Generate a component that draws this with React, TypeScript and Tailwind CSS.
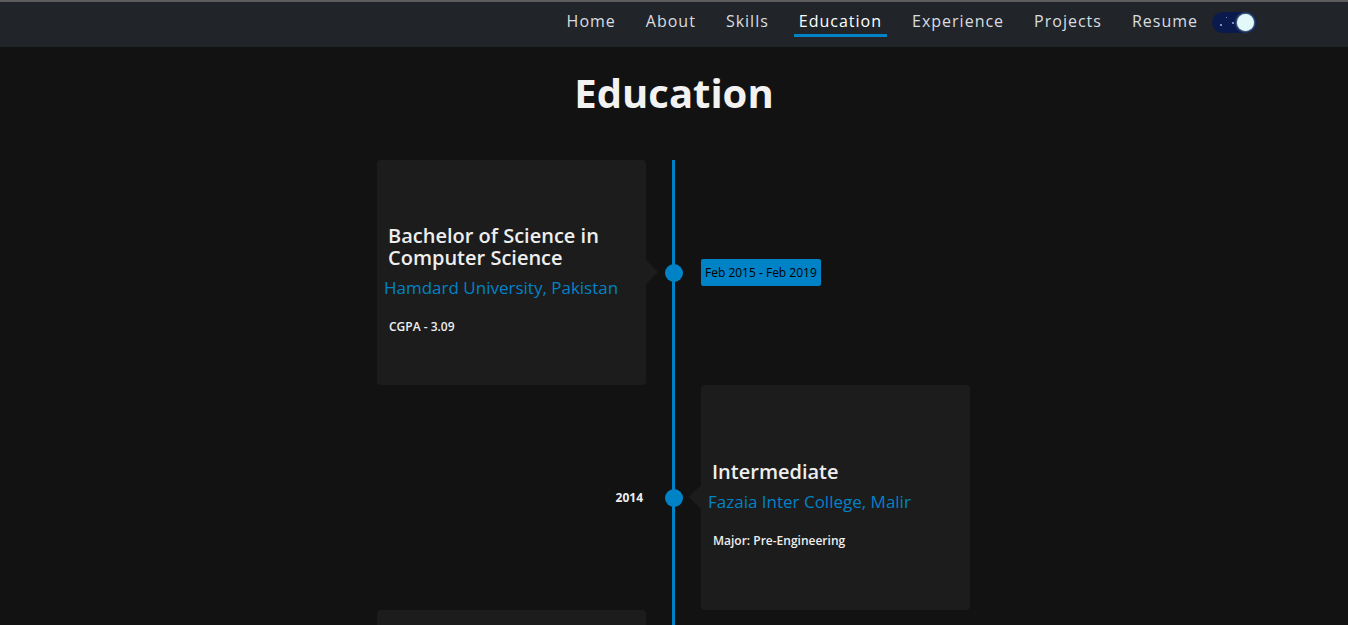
import React from "react";

const font = { fontFamily: '"Open Sans", "Noto Sans", sans-serif' };

const links = ["Home", "About", "Skills", "Education", "Experience", "Projects", "Resume"];

const Toggle = () => (
  <div className="relative ml-[9px] mt-[10px] h-[21px] w-[45px] rounded-full bg-[#0b1a4d]">
    <span className="absolute left-[8px] top-[12px] h-[2px] w-[2px] rounded-full bg-[#9fb3e6]" />
    <span className="absolute left-[14px] top-[5px] h-[1px] w-[1px] rounded-full bg-[#9fb3e6]" />
    <span className="absolute left-[20px] top-[10px] h-[2px] w-[2px] rounded-full bg-[#9fb3e6]" />
    <span className="absolute right-[3px] top-[2px] h-[17px] w-[17px] rounded-full bg-[#e3f8f8] shadow-[0_0_3px_#bfeaf0]" />
  </div>
);

const Navbar = () => (
  <div className="border-t-2 border-[#5d5d5d] bg-[#212529]">
    <div className="flex h-[45px] items-start justify-end pr-[91px]">
      <nav className="flex items-start gap-[20px] pt-[7px]">
        {links.map((l) => (
          <a
            key={l}
            className={`relative px-[5px] text-[16px] leading-[24px] tracking-[1px] ${
              l === "Education" ? "text-white" : "text-[#d9dde0]"
            }`}
          >
            {l}
            {l === "Education" && (
              <span className="absolute bottom-[-4px] left-0 h-[3px] w-full bg-[#0082c6]" />
            )}
          </a>
        ))}
      </nav>
      <Toggle />
    </div>
  </div>
);

type Item = {
  side: "left" | "right";
  title: string[];
  school: string;
  note: string;
  date: string;
  badge: boolean;
};

const items: Item[] = [
  {
    side: "left",
    title: ["Bachelor of Science in", "Computer Science"],
    school: "Hamdard University, Pakistan",
    note: "CGPA - 3.09",
    date: "Feb 2015 - Feb 2019",
    badge: true,
  },
  {
    side: "right",
    title: ["Intermediate"],
    school: "Fazaia Inter College, Malir",
    note: "Major: Pre-Engineering",
    date: "2014",
    badge: false,
  },
  {
    side: "left",
    title: ["Matriculation"],
    school: "",
    note: "",
    date: "",
    badge: false,
  },
];

const Card = ({ item }: { item: Item }) => (
  <div className="relative flex h-[225px] w-[269px] shrink-0 flex-col justify-center rounded-[4px] bg-[#1c1c1c] px-[11px] pt-[16px]">
    {item.side === "left" ? (
      <span className="absolute right-[-12px] top-[100px] h-0 w-0 border-y-[12px] border-l-[12px] border-y-transparent border-l-[#1c1c1c]" />
    ) : (
      <span className="absolute left-[-12px] top-[100px] h-0 w-0 border-y-[12px] border-r-[12px] border-y-transparent border-r-[#1c1c1c]" />
    )}
    <h3 className="text-[20px] font-semibold leading-[22px] text-[#eeeeee]">
      {item.title.map((t) => (
        <div key={t}>{t}</div>
      ))}
    </h3>
    <h4 className="ml-[-4px] mt-[7px] text-[17px] font-medium leading-[24px] text-[#0082c6]">
      {item.school}
    </h4>
    <p className="ml-[1px] mt-[18px] text-[12px] font-semibold text-[#eeeeee]">{item.note}</p>
  </div>
);

const DateLabel = ({ item }: { item: Item }) =>
  item.badge ? (
    <span className="flex h-[27px] items-center rounded-[2px] bg-[#0082c6] px-[4px] text-[12px] text-black">
      {item.date}
    </span>
  ) : (
    <span className="mr-[3px] text-[12px] font-bold text-[#eeeeee]">{item.date}</span>
  );

const Row = ({ item }: { item: Item }) => (
  <div className="grid h-[225px] grid-cols-[269px_55px_269px]">
    <div className="flex items-center justify-end">
      {item.side === "left" ? <Card item={item} /> : item.date && <DateLabel item={item} />}
    </div>
    <div className="relative flex items-center justify-center">
      <div className="absolute inset-y-0 left-[26px] w-[3px] bg-[#0082c6]" />
      <div className="relative h-[18px] w-[18px] rounded-full bg-[#0082c6]" />
    </div>
    <div className="flex items-center justify-start">
      {item.side === "right" ? <Card item={item} /> : item.date && <DateLabel item={item} />}
    </div>
  </div>
);

export default function App() {
  return (
    <div className="h-[625px] overflow-hidden bg-[#121212]" style={font}>
      <Navbar />
      <h1 className="mt-[19px] text-center text-[40px] font-bold leading-[54px] text-[#f2f2f2]">
        Education
      </h1>
      <div className="mt-[40px] flex justify-center pr-[1px]">
        <div className="flex flex-col">
          {items.map((it, i) => (
            <Row key={i} item={it} />
          ))}
        </div>
      </div>
    </div>
  );
}
